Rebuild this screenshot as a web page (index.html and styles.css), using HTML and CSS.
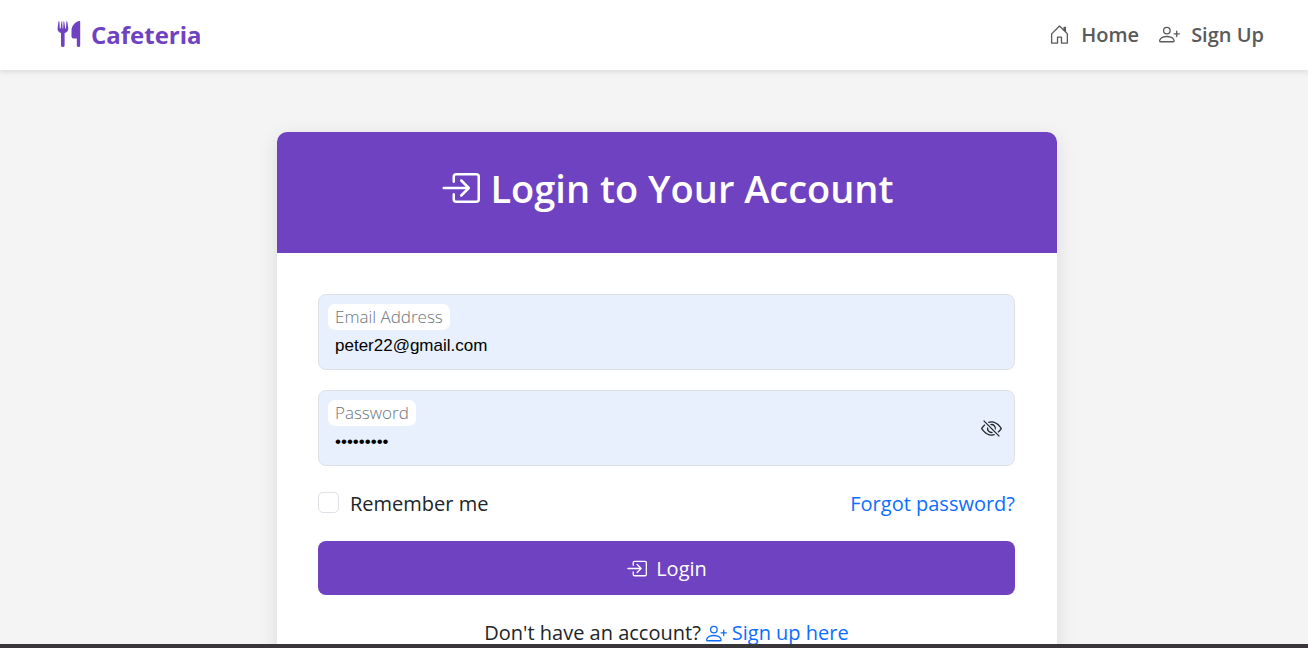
FILE: index.html
```html
<!DOCTYPE html>
<html lang="en">
<head>
<meta charset="utf-8">
<meta name="viewport" content="width=device-width, initial-scale=1">
<title>Cafeteria - Login</title>
<link rel="stylesheet" href="styles.css">
</head>
<body>
<svg class="sprite" aria-hidden="true">
  <symbol id="i-login" viewBox="0 0 16 16">
    <path d="M6 3.5a.5.5 0 0 1 .5-.5h8a.5.5 0 0 1 .5.5v9a.5.5 0 0 1-.5.5h-8a.5.5 0 0 1-.5-.5v-2a.5.5 0 0 0-1 0v2A1.5 1.5 0 0 0 6.500 14h8a1.500 1.500 0 0 0 1.500-1.500v-9A1.500 1.500 0 0 0 14.500 2h-8A1.500 1.500 0 0 0 5 3.500v2a.5.5 0 0 0 1 0z"/>
    <path d="M11.854 8.354a.5.5 0 0 0 0-.708l-3-3a.5.5 0 1 0-.708.708L10.293 7.500H1.500a.5.5 0 0 0 0 1h8.793l-2.147 2.146a.5.5 0 0 0 .708.708z"/>
  </symbol>
  <symbol id="i-person" viewBox="0 0 16 16">
    <path d="M6 8a3 3 0 1 0 0-6 3 3 0 0 0 0 6zm2-3a2 2 0 1 1-4 0 2 2 0 0 1 4 0zm4 8c0 1-1 1-1 1H1s-1 0-1-1 1-4 6-4 6 3 6 4zm-1-.004c-.001-.246-.154-.986-.832-1.664C9.516 10.680 8.289 10 6 10c-2.290 0-3.516.68-4.168 1.332-.678.678-.83 1.418-.832 1.664z"/>
    <path d="M13.500 5a.5.5 0 0 1 .5.5V7h1.500a.5.5 0 0 1 0 1H14v1.500a.5.5 0 0 1-1 0V8h-1.500a.5.5 0 0 1 0-1H13V5.500a.5.5 0 0 1 .5-.5z"/>
  </symbol>
</svg>

<header class="navbar">
  <a class="brand" href="#">
    <svg class="brand-icon" viewBox="0 0 24 28" aria-hidden="true">
      <path d="M1.500 0.500L0.500 7.500C0.500 10 2 11.500 4 12V24.500Q4 26 5.800 26T7.600 24.500V12C9.800 11.500 11.300 10 11.300 7.500L10.300 0.500Q9.800 0 9.400 0.500L9 7.500H8.200L7.200 0.500Q6.900 0 6.500 0.500L6.200 7.500H5.600L5.200 0.500Q4.900 0 4.500 0.500L3.600 7.500H2.800L2.400 0.500Q2 0 1.500 0.500ZM22 0C18 1 14.500 5 14.500 9.500V15.500Q14.500 17.500 16.500 17.500H19.800V24.500Q19.800 26 21.500 26T23.200 24.500V1Q23.200 -0.300 22 0Z"/>
    </svg>
    Cafeteria
  </a>
  <nav class="links">
    <a class="nav-link" href="#">
      <svg class="icon" viewBox="0 0 16 16" aria-hidden="true"><path d="M8.354 1.146a.5.5 0 0 0-.708 0l-6 6A.5.5 0 0 0 1.500 7.500v7a.5.5 0 0 0 .5.5h4.500a.5.5 0 0 0 .5-.5v-4h2v4a.5.5 0 0 0 .5.5H14a.5.5 0 0 0 .5-.5v-7a.5.5 0 0 0-.146-.354L13 5.793V2.500a.5.5 0 0 0-.5-.5h-1a.5.5 0 0 0-.5.5v1.293zM2.500 14V7.707l5.500-5.500 5.500 5.500V14H10v-4a.5.5 0 0 0-.5-.5h-3a.5.5 0 0 0-.5.5v4z"/></svg>
      Home
    </a>
    <a class="nav-link" href="#">
      <svg class="icon" aria-hidden="true"><use href="#i-person"/></svg>
      Sign Up
    </a>
  </nav>
</header>

<main class="page">
  <section class="card">
    <div class="card-header">
      <h1 class="title">
        <svg class="icon icon-large" aria-hidden="true"><use href="#i-login"/></svg>
        Login to Your Account
      </h1>
    </div>
    <form class="card-body">
      <div class="field">
        <label class="field-label" for="email">Email Address</label>
        <input class="field-input" id="email" type="email" value="peter22@gmail.com">
      </div>
      <div class="field">
        <label class="field-label" for="password">Password</label>
        <input class="field-input" id="password" type="password" value="cafeteria">
        <button class="toggle" type="button" aria-label="Show password">
          <svg class="icon" viewBox="0 0 16 16" aria-hidden="true">
            <path d="M13.359 11.238C15.060 9.720 16 8 16 8s-3-5.500-8-5.500a7.028 7.028 0 0 0-2.790.588l.77.771A5.944 5.944 0 0 1 8 3.500c2.120 0 3.879 1.168 5.168 2.457A13.134 13.134 0 0 1 14.828 8c-.058.087-.122.183-.195.288-.335.48-.83 1.120-1.465 1.755-.165.165-.337.328-.517.486z"/>
            <path d="M11.297 9.176a3.500 3.500 0 0 0-4.474-4.474l.823.823a2.500 2.500 0 0 1 2.829 2.829zm-2.943 1.299.822.822a3.500 3.500 0 0 1-4.474-4.474l.823.823a2.500 2.500 0 0 0 2.829 2.829"/>
            <path d="M3.350 5.470c-.18.16-.353.322-.518.487A13.134 13.134 0 0 0 1.172 8l.195.288c.335.48.83 1.120 1.465 1.755C4.121 11.332 5.881 12.500 8 12.500c.716 0 1.390-.133 2.020-.36l.77.772A7.029 7.029 0 0 1 8 13.500C3 13.500 0 8 0 8s.939-1.721 2.641-3.238l.708.709zm10.296 8.884-12-12 .708-.708 12 12z"/>
          </svg>
        </button>
      </div>
      <div class="options">
        <div class="remember">
          <input class="check" id="remember" type="checkbox">
          <label for="remember">Remember me</label>
        </div>
        <a class="link" href="#">Forgot password?</a>
      </div>
      <button class="submit" type="submit">
        <svg class="icon" aria-hidden="true"><use href="#i-login"/></svg>
        Login
      </button>
      <p class="signup">
        Don't have an account?
        <a class="link link-icon" href="#"><svg class="icon" aria-hidden="true"><use href="#i-person"/></svg>Sign up here</a>
      </p>
    </form>
  </section>
</main>
<div class="window-edge"></div>
</body>
</html>
```

FILE: styles.css
```css
* {
  box-sizing: border-box;
}

body {
  margin: 0;
  height: 100vh;
  display: flex;
  flex-direction: column;
  overflow: hidden;
  background: #f4f4f4;
  color: #212529;
  font: 400 20px/30px "Open Sans", "Noto Sans", sans-serif;
}

a {
  text-decoration: none;
}

.sprite {
  position: absolute;
  width: 0;
  height: 0;
}

.icon {
  width: 21px;
  height: 21px;
  flex: none;
  fill: currentColor;
}

.icon-large {
  width: 40px;
  height: 40px;
}

.navbar {
  flex: none;
  height: 70px;
  display: flex;
  align-items: center;
  justify-content: space-between;
  padding: 0 44px 0 57px;
  background: #fff;
  box-shadow: 0 2px 5px rgba(0, 0, 0, 0.1);
  z-index: 1;
}

.brand {
  display: flex;
  align-items: center;
  gap: 10px;
  color: #6f42c1;
  font-size: 24px;
  font-weight: 700;
}

.brand-icon {
  width: 24px;
  height: 28px;
  fill: currentColor;
}

.links {
  display: flex;
  gap: 20px;
}

.nav-link {
  display: flex;
  align-items: center;
  gap: 11px;
  color: #5a5a5a;
  font-weight: 600;
}

.nav-link .icon {
  margin-bottom: 2px;
}

.page {
  flex: 1;
  min-height: 0;
  overflow: hidden;
  padding: 62px 16px 0 42px;
}

.card {
  max-width: 780px;
  margin: 0 auto;
  background: #fff;
  border-radius: 10px;
  box-shadow: 0 5px 20px rgba(0, 0, 0, 0.1);
}

.card-header {
  padding: 32px 40px 41px;
  background: #6f42c1;
  border-radius: 10px 10px 0 0;
}

.title {
  display: flex;
  align-items: center;
  justify-content: center;
  gap: 10px;
  margin: 0;
  color: #fff;
  font-size: 38px;
  line-height: 48px;
  font-weight: 600;
}

.card-body {
  padding: 41px 42px 41px 41px;
}

.field {
  position: relative;
  margin-bottom: 20px;
}

.field-label {
  position: absolute;
  top: 10px;
  left: 10px;
  padding: 0 7px;
  border-radius: 7px;
  background: #fff;
  color: #6c757d;
  font-size: 17px;
  line-height: 26px;
  font-weight: 300;
}

.field-input {
  display: block;
  width: 100%;
  height: 76px;
  padding: 34px 16px 7px;
  border: 1px solid #dee2e6;
  border-radius: 8px;
  background: #e8f0fe;
  color: #000;
  font: 17px "Liberation Sans", Arial, sans-serif;
}

.toggle {
  position: absolute;
  top: 0;
  right: 13px;
  bottom: 0;
  display: flex;
  align-items: center;
  padding: 0;
  border: 0;
  background: none;
  color: #212529;
}

.options {
  display: flex;
  justify-content: space-between;
  padding: 3px 0 22px;
}

.remember {
  display: flex;
  align-items: center;
  gap: 11px;
}

.check {
  appearance: none;
  width: 21px;
  height: 21px;
  margin: 0 0 3px;
  border: 1px solid #dee2e6;
  border-radius: 5px;
  background: #fff;
}

.check:checked {
  background: #6f42c1;
}

.link {
  color: #0d6efd;
}

.submit {
  display: flex;
  align-items: center;
  justify-content: center;
  gap: 9px;
  width: 100%;
  height: 54px;
  padding: 2px 12px 0;
  border: 0;
  border-radius: 8px;
  background: #6f42c1;
  color: #fff;
  font: inherit;
}

.submit .icon {
  margin-bottom: 2px;
}

.signup {
  display: flex;
  justify-content: center;
  gap: 5px;
  margin: 23px 0 0;
}

.link-icon {
  display: flex;
  align-items: center;
  gap: 5px;
}

.window-edge {
  flex: none;
  height: 4px;
  background: #38363a;
  z-index: 1;
}
```
